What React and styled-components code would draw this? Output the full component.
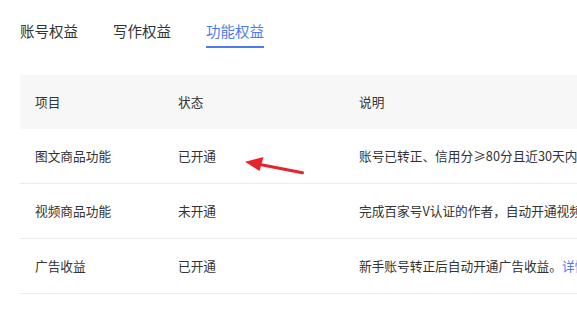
import React from 'react';
import styled, { createGlobalStyle } from 'styled-components';

const GlobalStyle = createGlobalStyle`
  html, body {
    margin: 0;
    padding: 0;
    background: #fff;
    overflow: hidden;
  }
  body {
    font-family: "Noto Sans CJK SC", "Noto Sans", sans-serif;
    color: #333;
  }
`;

const tabs = ['账号权益', '写作权益', '功能权益'];

const rows = [
  {
    name: '图文商品功能',
    status: '已开通',
    desc: '账号已转正、信用分≥80分且近30天内无违规，自动开通图文商品功能。',
  },
  {
    name: '视频商品功能',
    status: '未开通',
    desc: '完成百家号V认证的作者，自动开通视频商品功能。',
  },
  {
    name: '广告收益',
    status: '已开通',
    desc: '新手账号转正后自动开通广告收益。',
    link: '详情',
  },
];

class App extends React.Component {
  render() {
    return (
      <Page>
        <GlobalStyle />
        <TabBar>
          {tabs.map((t, i) => (
            <Tab key={t} active={i === 2}>{t}</Tab>
          ))}
        </TabBar>
        <TableWrap>
          <HeadRow>
            <Cell>项目</Cell>
            <Cell>状态</Cell>
            <Cell>说明</Cell>
          </HeadRow>
          {rows.map(r => (
            <Row key={r.name}>
              <Cell>{r.name}</Cell>
              <Cell>{r.status}</Cell>
              <Cell>
                {r.desc}
                {r.link && <Link>{r.link}</Link>}
              </Cell>
            </Row>
          ))}
          {/* red annotation arrow pointing at the status */}
          <Arrow width="66" height="28" viewBox="0 0 66 28">
            <path d="M20 14.5 L62.5 22.8" stroke="#e8232b" strokeWidth="3" strokeLinecap="round" />
            <path d="M5 11.7 L23.5 7 L19.5 21 Z" fill="#e8232b" />
          </Arrow>
        </TableWrap>
      </Page>
    );
  }
}

const Page = styled.div`
  width: 577px;
  height: 313px;
  overflow: hidden;
  white-space: nowrap;
`;

const TabBar = styled.div`
  display: flex;
  gap: 35px;
  padding: 21px 0 0 20px;
  height: 54px;
  box-sizing: border-box;
`;

const Tab = styled.div`
  font-size: 14.5px;
  line-height: 20px;
  height: 27px;
  box-sizing: border-box;
  color: ${p => (p.active ? '#4a7cf0' : '#333')};
  border-bottom: 2px solid ${p => (p.active ? '#4a7cf0' : 'transparent')};
  padding-bottom: 5px;
`;

const TableWrap = styled.div`
  position: relative;
  margin: 21px 0 0 20px;
  width: 760px;
`;

const HeadRow = styled.div`
  display: grid;
  grid-template-columns: 143px 181px 1fr;
  height: 54px;
  align-items: center;
  background: #f7f7f7;
`;

const Row = styled(HeadRow)`
  background: #fff;
  height: 55px;
  border-bottom: 1px solid #ebebeb;
  box-sizing: border-box;
`;

const Cell = styled.div`
  padding-left: 15px;
  font-size: 12.7px;
  line-height: 18px;
  color: #333;
`;

const Link = styled.span`
  color: #4a7cf0;
`;

const Arrow = styled.svg`
  position: absolute;
  left: 220px;
  top: 75px;
`;

export default App;
